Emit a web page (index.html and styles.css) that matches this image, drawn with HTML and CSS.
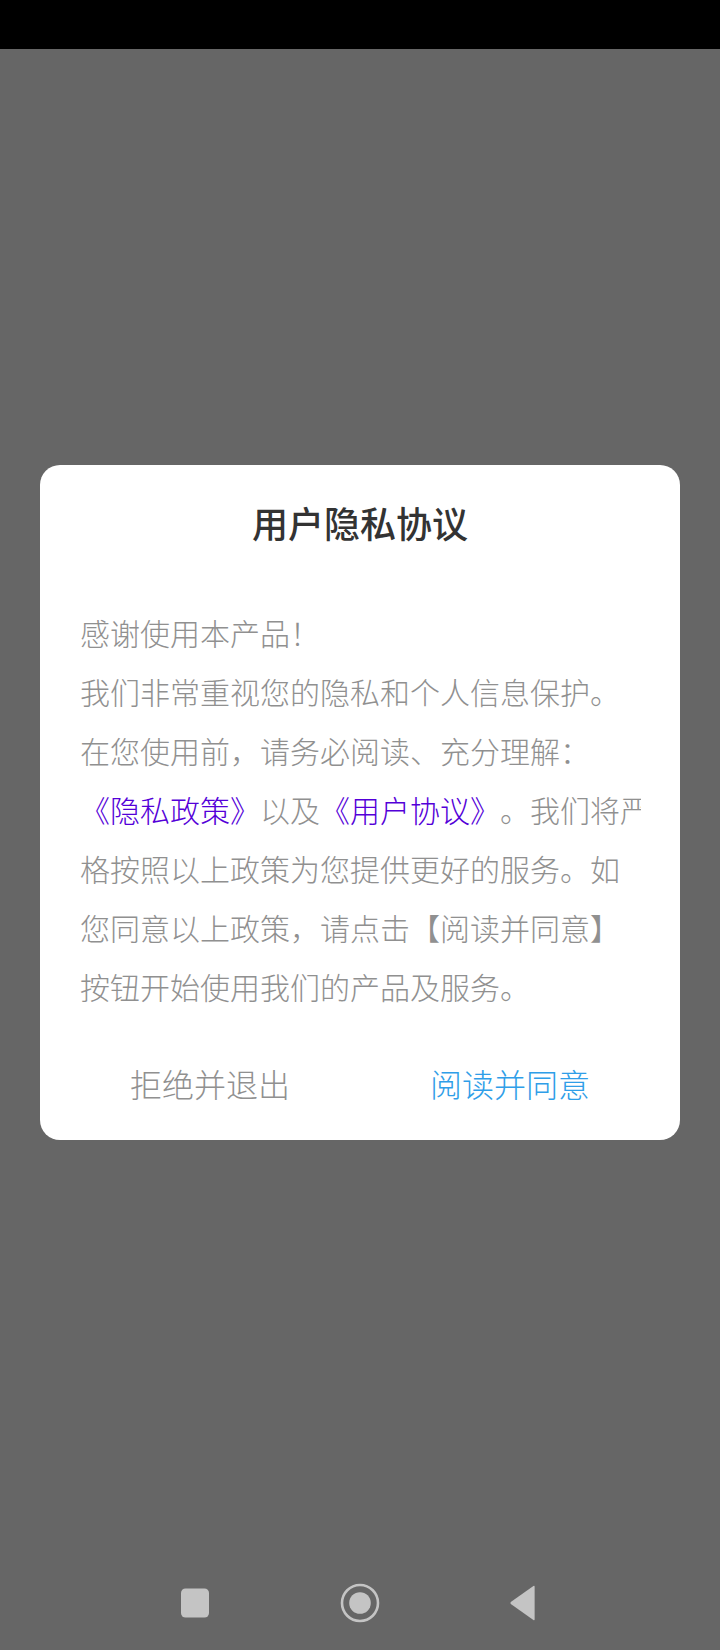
FILE: index.html
```html
<!DOCTYPE html>
<html>
<head>
    <title>用户隐私协议</title>
    <link rel="stylesheet" href="styles.css">
</head>
<body>
    <div class="status-bar"></div>

    <!-- 隐私弹窗 -->
    <div class="overlay">
        <div class="dialog">
            <h2 class="dialog-title">用户隐私协议</h2>
            <p class="dialog-text">感谢使用本产品！<br>
            我们非常重视您的隐私和个人信息保护。<br>
            在您使用前，请务必阅读、充分理解：<br>
            <a class="policy-link">《隐私政策》</a>以及<a class="policy-link">《用户协议》</a>。我们将严<br>
            格按照以上政策为您提供更好的服务。如<br>
            您同意以上政策，请点击【阅读并同意】<br>
            按钮开始使用我们的产品及服务。</p>
            <div class="dialog-actions">
                <div class="action action-refuse">拒绝并退出</div>
                <div class="action action-agree">阅读并同意</div>
            </div>
        </div>
    </div>

    <!-- 底部导航 -->
    <div class="nav-bar">
        <svg class="nav-icon" width="32" height="30" viewBox="0 0 32 30"><rect x="2" y="0.5" width="28" height="29" rx="4.5" fill="#c4c4c4"/></svg>
        <svg class="nav-icon" width="40" height="40" viewBox="0 0 40 40"><circle cx="20" cy="20" r="18" fill="none" stroke="#c4c4c4" stroke-width="2.6"/><circle cx="20" cy="20" r="10.8" fill="#c4c4c4"/></svg>
        <svg class="nav-icon" width="27" height="36" viewBox="0 0 27 36"><path d="M25.6 1.6 V34.4 Q25.6 35.6 24.4 35 L1.8 19 Q1 18 1.8 17 L24.4 1 Q25.6 .4 25.6 1.6 Z" fill="#c4c4c4"/></svg>
    </div>
</body>
</html>
```

FILE: styles.css
```css
html, body {
    margin: 0;
    padding: 0;
    height: 100%;
}
body {
    display: flex;
    flex-direction: column;
    height: 1650px;
    background-color: #666;
    font-family: "Noto Sans CJK SC", "Noto Sans", sans-serif;
}
.status-bar {
    height: 49px;
    background-color: #000;
}
.overlay {
    flex: 1;
    display: flex;
    align-items: center;
    justify-content: center;
}
.dialog {
    width: 640px;
    height: 675px;
    background-color: #fff;
    border-radius: 20px;
    box-sizing: border-box;
    padding-top: 27px;
}
.dialog-title {
    margin: 0;
    font-size: 36px;
    font-weight: 500;
    line-height: 60px;
    text-align: center;
    color: #333;
}
.dialog-text {
    width: 561px;
    margin: 51px 0 0 40px;
    font-size: 30px;
    font-weight: 300;
    line-height: 59px;
    color: #909090;
    white-space: nowrap;
    overflow: hidden;
    text-spacing-trim: space-all;
}
.policy-link {
    color: #5400d8;
}
.dialog-actions {
    display: flex;
    margin-top: 37px;
    padding: 0 20px;
}
.action {
    flex: 1;
    font-size: 32px;
    font-weight: 300;
    line-height: 60px;
    text-align: center;
}
.action-refuse {
    color: #909090;
}
.action-agree {
    color: #2f9ee8;
}
.nav-bar {
    height: 94px;
    display: flex;
    align-items: center;
    padding-left: 179px;
    gap: 129px;
}
```
